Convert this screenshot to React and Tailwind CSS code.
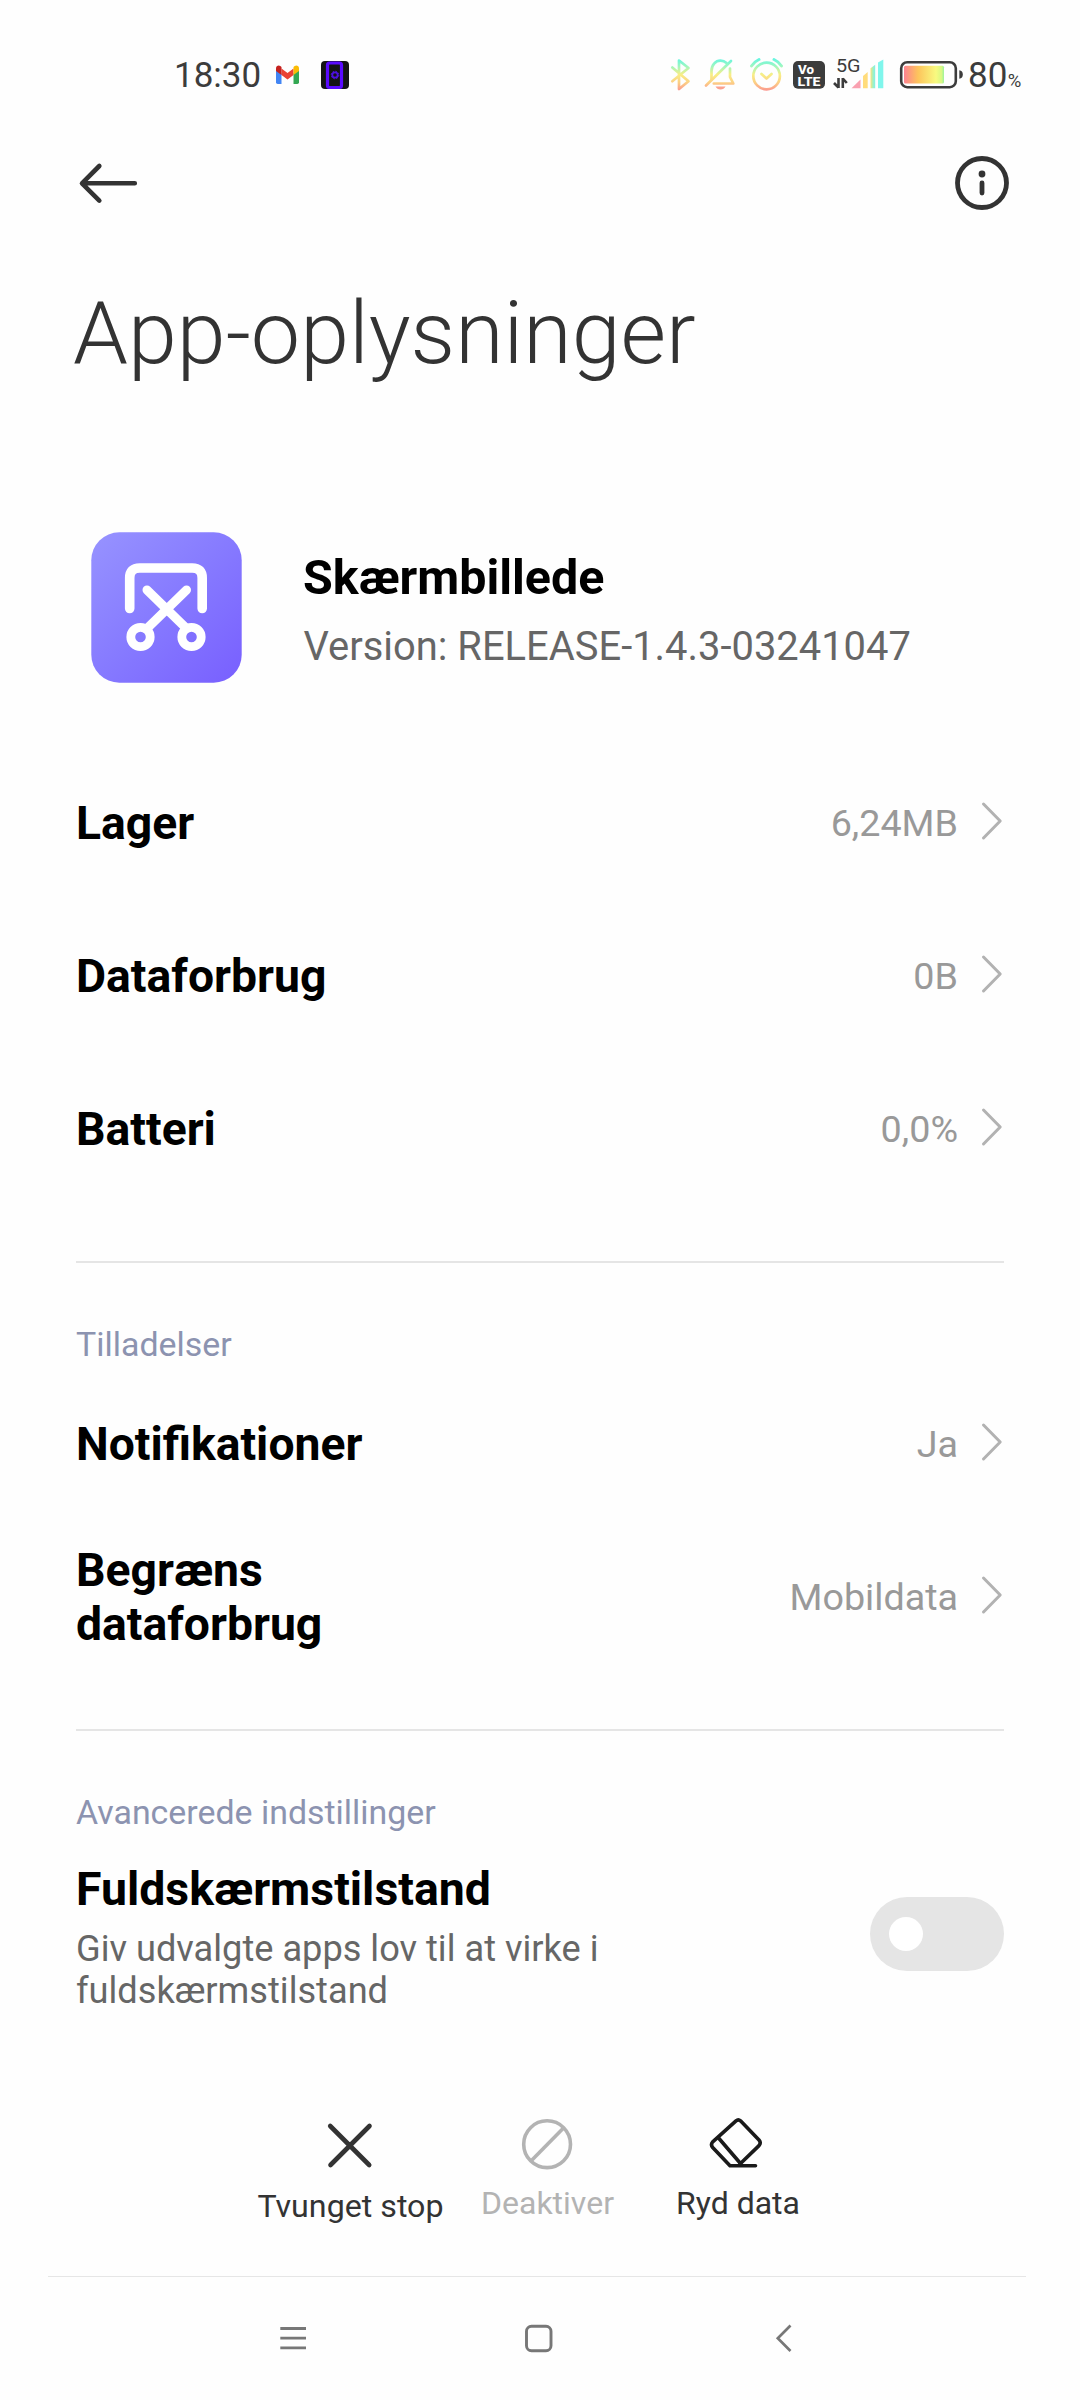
import React from "react";

function StatusBar() {
  return (
    <div className="mt-[51px] flex h-[50px] items-center pl-[174px] text-[35px] leading-[50px] font-[450] text-[#3c3c3c]">
      <span className="w-[96px]">18:30</span>
      <svg className="h-[50px] w-[36px]" viewBox="270 51 36 50">
        <path d="M276 70v12.300q0 1.700 1.700 1.700h3.800V73.500z" fill="#4285f4" />
        <path d="M299 70v12.300q0 1.700-1.700 1.700h-3.800V73.500z" fill="#34a853" />
        <path d="M281.500 68.500l6 4.500 6-4.500v6.500l-6 4.600-6-4.600z" fill="#ea4335" />
        <path d="M276 71v-2.600c0-2.600 2.600-3.500 4.300-2.300l1.200 1v7.900z" fill="#c5221f" />
        <path d="M299 71v-2.600c0-2.600-2.600-3.500-4.300-2.300l-1.200 1v7.900z" fill="#fbbc04" />
      </svg>
      <svg className="h-[50px] w-[50px]" viewBox="306 51 50 50">
        <rect x="321" y="61" width="28" height="28" rx="4" fill="#141414" />
        <rect x="327.500" y="63" width="14" height="24.500" rx="2" fill="#141414" stroke="#5a0bff" strokeWidth="3.200" />
        <circle cx="335" cy="75" r="2.700" fill="none" stroke="#4d10e0" strokeWidth="1.800" />
        <circle cx="335" cy="75" r="3.800" fill="none" stroke="#4d10e0" strokeWidth="1" strokeDasharray="1.500 1.480" />
      </svg>

      <svg className="ml-[309px] h-[50px] w-[225px]" viewBox="665 51 225 50">
        <defs>
          <linearGradient id="rainbow" gradientUnits="userSpaceOnUse" x1="0" y1="58" x2="0" y2="91">
            <stop offset="0" stopColor="#5ff5e4" />
            <stop offset="0.250" stopColor="#9ff7c0" />
            <stop offset="0.500" stopColor="#f8ee86" />
            <stop offset="0.750" stopColor="#fccf85" />
            <stop offset="1" stopColor="#fb9490" />
          </linearGradient>
          <linearGradient id="barmix" x1="0" y1="0" x2="1" y2="0">
            <stop offset="0" stopColor="#ffe27a" />
            <stop offset="0.500" stopColor="#a5f0c0" />
            <stop offset="1" stopColor="#7df3e8" />
          </linearGradient>
        </defs>
        <g fill="none" stroke="url(#rainbow)" strokeWidth="2.700" strokeLinecap="round" strokeLinejoin="round">
          <path d="M672.300 67.500l16.200 13.700-9.500 7.800V60.500l9.500 7.500-16.200 13.200" />
          <path d="M711.500 79.500v-8.500c0-6 4-10.300 9-10.300 2.500 0 4.500 1 6 2.400M730 68.500v8.500l3.300 6.500h-19.500" />
          <path d="M706 85.500L731 61" />
          <circle cx="766.600" cy="76" r="13.300" />
          <path d="M761.500 74l5 4.500 5-4.500" />
          <path d="M751.500 66q3-4.500 7.500-6.500M781.500 66q-3-4.500-7.500-6.500" strokeWidth="3" />
        </g>
        <path d="M715.500 86.500h10q-1.500 3-5 3t-5-3z" fill="#fba290" />
        <rect x="793" y="61" width="32" height="27.700" rx="5" fill="#3c3c3c" />
        <text x="798" y="73.600" fill="#fff" fontFamily="Roboto, sans-serif" fontWeight="800" fontSize="12.500" textLength="16" lengthAdjust="spacingAndGlyphs">Vo</text>
        <text x="797.500" y="85.600" fill="#fff" fontFamily="Roboto, sans-serif" fontWeight="800" fontSize="12.500" textLength="23" lengthAdjust="spacingAndGlyphs">LTE</text>
        <text x="836" y="72" fill="#3c3c3c" fontFamily="Roboto, sans-serif" fontWeight="400" fontSize="18.800" textLength="24.600" lengthAdjust="spacingAndGlyphs">5G</text>
        <path d="M838.500 78v10M838.500 87.500l-4.500-4.500M842.800 88V78M842.800 78.500l4 4.500" fill="none" stroke="#3c3c3c" strokeWidth="2.600" />
        <path d="M851.500 88.300l9-8.800v8.800z" fill="#f9a0b0" />
        <path d="M863 88.300v-12.300l4.700-4v16.300z" fill="#ffdc7c" />
        <path d="M870.500 88.300v-20l4.700-3.500v23.500z" fill="url(#barmix)" />
        <path d="M878 88.300V62.500l5.300-3v28.800z" fill="#80f6ec" />
      </svg>
      <svg className="h-[50px] w-[78px]" viewBox="890 51 78 50">
        <defs>
          <linearGradient id="charge" x1="0" y1="0" x2="1" y2="0">
            <stop offset="0" stopColor="#fd8290" />
            <stop offset="0.350" stopColor="#fdc45c" />
            <stop offset="0.800" stopColor="#f8fa80" />
            <stop offset="0.940" stopColor="#d8f884" />
            <stop offset="1" stopColor="#9cf39c" />
          </linearGradient>
        </defs>
        <rect x="901.200" y="62.200" width="54.600" height="25" rx="6" fill="none" stroke="#3c3c3c" strokeWidth="2.600" />
        <rect x="904" y="65.700" width="40" height="17.800" rx="1.500" fill="url(#charge)" />
        <path d="M959.300 70.300q3.500.5 3.500 4.200t-3.500 4.200z" fill="#3c3c3c" />
      </svg>
      <span>80</span>
      <span className="mt-[9px] ml-[0.500px] text-[18.500px]">%</span>
    </div>
  );
}

function Header() {
  return (
    <div className="mt-[10px] flex h-[144px] items-center justify-between pr-[70px] pl-[74px]">
      <svg className="h-[60px] w-[70px]" viewBox="74 153 70 60" fill="none" stroke="#333" strokeWidth="4.600" strokeLinecap="round" strokeLinejoin="round">
        <path d="M134.800 183.300H82.500M99.300 166L82 183.300l17.300 17.300" />
      </svg>
      <svg className="h-[56px] w-[56px]" viewBox="954 155 56 56">
        <circle cx="982" cy="183" r="24.500" fill="none" stroke="#333" strokeWidth="4.800" />
        <circle cx="982" cy="174" r="3.400" fill="#333" />
        <path d="M982 183v10" stroke="#333" strokeWidth="4.800" strokeLinecap="round" />
      </svg>
    </div>
  );
}

function Chevron() {
  return (
    <svg className="mb-[3px] ml-[18px] h-[40px] w-[28px] shrink-0" viewBox="0 0 28 40" fill="none" stroke="#b2b2b2" strokeWidth="3" strokeLinecap="round" strokeLinejoin="round">
      <path d="M7.500 3L24.200 20 7.500 37" />
    </svg>
  );
}

function Row({ label, value }) {
  return (
    <div className="flex h-[153px] items-center justify-between">
      <div className="w-[300px] text-[46.300px] leading-[54px] font-bold text-black">{label}</div>
      <div className="flex items-center">
        <span className="text-[37.700px] leading-[46px] text-[#999]">{value}</span>
        <Chevron />
      </div>
    </div>
  );
}

function SectionTitle({ children }) {
  return <h2 className="mt-[58px] text-[33.900px] leading-[48px] text-[#8c93b0]">{children}</h2>;
}

function Action({ className, textClass, label, children }) {
  return (
    <div className={"flex flex-col items-center " + className}>
      {children}
      <span className={"leading-[38px] whitespace-nowrap " + textClass}>{label}</span>
    </div>
  );
}

function Actions() {
  return (
    <div className="mt-[102px] flex h-[162px] items-start pl-[258px]">
      <Action className="w-[185px]" textClass="mt-[13px] text-[32.200px] text-[#333]" label="Tvunget stop">
        <svg className="h-[60px] w-[60px]" viewBox="320.500 2114 60 60" fill="none" stroke="#333" strokeWidth="4.600" strokeLinecap="round">
          <path d="M329.700 2126l39 39M369 2126l-39 39" />
        </svg>
      </Action>
      <Action className="ml-[38px] w-[133px]" textClass="mt-[10px] text-[32px] text-[#b3b3b3]" label="Deaktiver">
        <svg className="h-[60px] w-[60px]" viewBox="517.500 2114 60 60" fill="none" stroke="#b3b3b3" strokeWidth="3.600">
          <circle cx="546.600" cy="2144.200" r="23.400" />
          <path d="M530.500 2161l32.500-33" />
        </svg>
      </Action>
      <Action className="ml-[62px] w-[124px]" textClass="mt-[10px] text-[32px] text-[#333]" label="Ryd data">
        <svg className="h-[60px] w-[60px]" viewBox="708 2114 60 60" fill="none" stroke="#1a1a1a" strokeWidth="3.600" strokeLinecap="round" strokeLinejoin="round">
          <path d="M755.500 2165.700H730L712.700 2147.500q-2.400-2.800 0-5.600L736 2120.800q2.300-2 4.500 0L759 2140q2.400 2.800 0 5.600L740 2164" />
          <path d="M719 2138.500L740.500 2163.500" />
        </svg>
      </Action>
    </div>
  );
}

function NavBar() {
  return (
    <div className="mx-[48px] mr-[54px] flex h-[124px] items-center justify-between border-t border-[#e6e6e6] px-[225px]">
      <svg className="h-[40px] w-[40px]" viewBox="273 2319 40 40" stroke="#777" strokeWidth="2.800">
        <path d="M280.300 2328.500H306M280.300 2338.200H306M280.300 2347.800H306" />
      </svg>
      <svg className="h-[40px] w-[40px]" viewBox="517 2319 40 40" fill="none" stroke="#777" strokeWidth="2.900">
        <rect x="526.500" y="2326.300" width="24.500" height="24.500" rx="5" />
      </svg>
      <svg className="h-[40px] w-[40px]" viewBox="761 2319 40 40" fill="none" stroke="#777" strokeWidth="2.700">
        <path d="M790.500 2325.500L777.800 2338.300l12.700 12.700" />
      </svg>
    </div>
  );
}

export default function App() {
  return (
    <div className="flow-root h-[2400px] w-[1080px] overflow-hidden bg-[#fefefe] font-[Roboto,sans-serif]">
      <StatusBar />
      <Header />
      <main className="px-[76px]">
        <h1 className="mt-[26px] -ml-[3px] text-[88px] leading-[104px] font-light text-[#333]">App-oplysninger</h1>

        <div className="mt-[147px] flex h-[151px] items-start pl-[14.500px]">
          <svg className="h-[151px] w-[151px] shrink-0" viewBox="0 0 151 151">
            <defs>
              <linearGradient id="tile" x1="0" y1="0" x2="1" y2="1">
                <stop offset="0" stopColor="#9793ff" />
                <stop offset="0.500" stopColor="#867aff" />
                <stop offset="1" stopColor="#785fff" />
              </linearGradient>
            </defs>
            <rect x="0.300" y="0.300" width="150.400" height="150.400" rx="28" fill="url(#tile)" />
            <g fill="none" stroke="#fff" strokeWidth="9.600" strokeLinecap="round" strokeLinejoin="round">
              <path d="M38.700 76.500V46q0-10 10-10h52.500q10 0 10 10v30.500" />
              <path d="M56 58l39 38M95.500 58l-39 38" strokeWidth="9" />
              <circle cx="49.500" cy="105" r="9.700" strokeWidth="8.800" />
              <circle cx="100.500" cy="105" r="9.700" strokeWidth="8.800" />
            </g>
          </svg>
          <div className="ml-[61.500px] pt-[18px]">
            <div className="text-[48.400px] leading-[56px] font-bold text-black">Skærmbillede</div>
            <div className="mt-[16px] ml-[0.500px] text-[39.900px] leading-[50px] text-[#666]">Version: RELEASE-1.4.3-03241047</div>
          </div>
        </div>

        <div className="mt-[63px]">
          <Row label="Lager" value="6,24MB" />
          <Row label="Dataforbrug" value="0B" />
          <Row label="Batteri" value="0,0%" />
        </div>

        <div className="mt-[56px] h-[2px] bg-[#e5e5e5]" />
        <SectionTitle>Tilladelser</SectionTitle>
        <div className="-mt-[2px]">
          <Row label="Notifikationer" value="Ja" />
          <Row label="Begræns dataforbrug" value="Mobildata" />
        </div>

        <div className="mt-[56px] h-[2px] bg-[#e5e5e5]" />
        <SectionTitle>Avancerede indstillinger</SectionTitle>
        <div className="mt-[25px] flex items-start justify-between">
          <div>
            <div className="text-[46.400px] leading-[54px] font-bold text-black">Fuldskærmstilstand</div>
            <p className="mt-[12px] w-[560px] text-[36.200px] leading-[42px] text-[#666]">Giv udvalgte apps lov til at virke i fuldskærmstilstand</p>
          </div>
          <button type="button" role="switch" aria-checked="false" aria-label="Fuldskærmstilstand" className="mt-[35px] flex h-[74px] w-[134px] items-center rounded-full bg-[#e5e5e5] pl-[19px]">
            <span className="h-[34px] w-[34px] rounded-full bg-white" />
          </button>
        </div>
      </main>
      <Actions />
      <NavBar />
    </div>
  );
}
